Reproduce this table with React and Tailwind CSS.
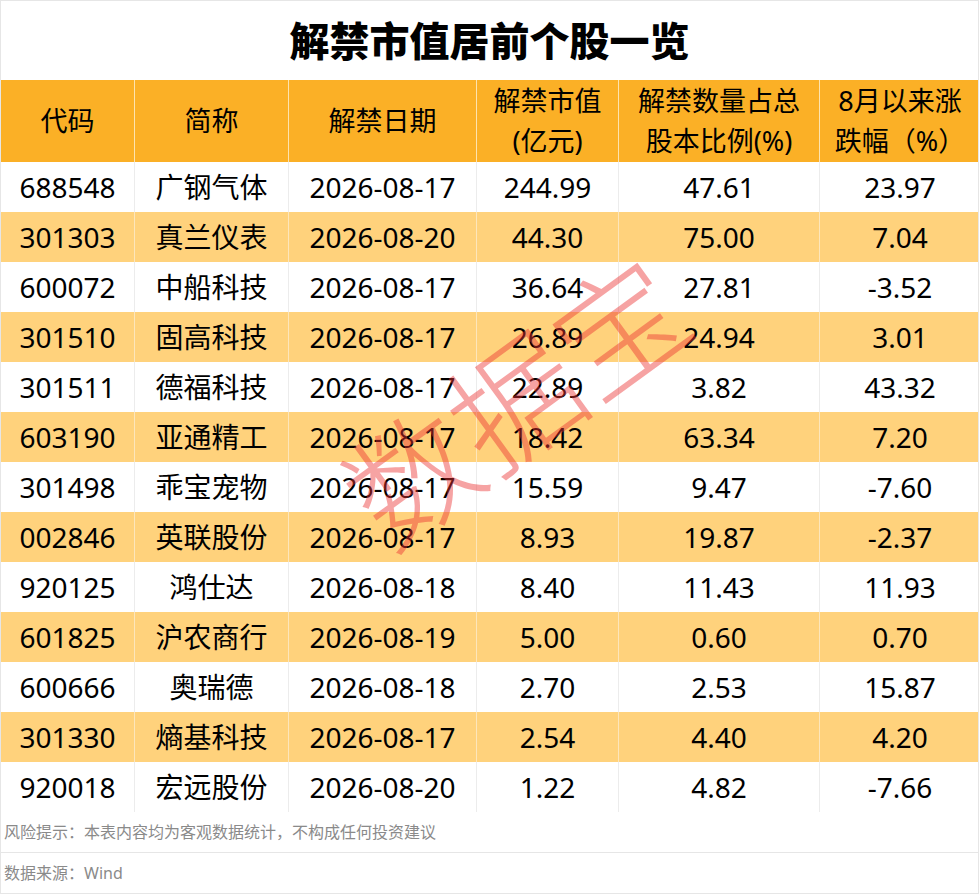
import React from 'react';

const ROWS = [
  ['688548', '广钢气体', '2026-08-17', '244.99', '47.61', '23.97'],
  ['301303', '真兰仪表', '2026-08-20', '44.30', '75.00', '7.04'],
  ['600072', '中船科技', '2026-08-17', '36.64', '27.81', '-3.52'],
  ['301510', '固高科技', '2026-08-17', '26.89', '24.94', '3.01'],
  ['301511', '德福科技', '2026-08-17', '22.89', '3.82', '43.32'],
  ['603190', '亚通精工', '2026-08-17', '18.42', '63.34', '7.20'],
  ['301498', '乖宝宠物', '2026-08-17', '15.59', '9.47', '-7.60'],
  ['002846', '英联股份', '2026-08-17', '8.93', '19.87', '-2.37'],
  ['920125', '鸿仕达', '2026-08-18', '8.40', '11.43', '11.93'],
  ['601825', '沪农商行', '2026-08-19', '5.00', '0.60', '0.70'],
  ['600666', '奥瑞德', '2026-08-18', '2.70', '2.53', '15.87'],
  ['301330', '熵基科技', '2026-08-17', '2.54', '4.40', '4.20'],
  ['920018', '宏远股份', '2026-08-20', '1.22', '4.82', '-7.66'],
];

const COLS = '133px 154px 188px 142px 201px 161px';

const HEADERS = [
  ['代码'],
  ['简称'],
  ['解禁日期'],
  ['解禁市值', '(亿元)'],
  ['解禁数量占总', '股本比例(%)'],
  ['8月以来涨', '跌幅（%）'],
];

export default function App() {
  return (
    <div
      className="relative w-[979px] h-[896px] bg-white overflow-hidden text-black"
      style={{ fontFamily: '"Noto Sans", "Noto Sans CJK SC", sans-serif' }}
    >
      <div className="border border-[#e6e6e6]">
        {/* 标题 */}
        <div className="h-[79px] flex items-center justify-center">
          <h1 className="text-[40px] font-black leading-none">解禁市值居前个股一览</h1>
        </div>

        {/* 表头 */}
        <div className="grid h-[82px] bg-[#fbb026]" style={{ gridTemplateColumns: COLS }}>
          {HEADERS.map((h, i) => (
            <div
              key={i}
              className={`flex flex-col items-center justify-center text-[27px] leading-[40px] ${i > 0 ? 'border-l border-[#fde3ae]' : ''}`}
            >
              {h.map((t) => (
                <span key={t}>{t}</span>
              ))}
            </div>
          ))}
        </div>

        {/* 数据行 */}
        {ROWS.map((r, ri) => (
          <div
            key={r[0]}
            className={`grid h-[50px] ${ri % 2 === 1 ? 'bg-[#ffd27c]' : 'bg-white'}`}
            style={{ gridTemplateColumns: COLS }}
          >
            {r.map((c, ci) => (
              <div
                key={ci}
                className={`flex items-center justify-center text-[28px] leading-none ${ci > 0 ? (ri % 2 === 1 ? 'border-l border-[#fde6bb]' : 'border-l border-[#ececec]') : ''}`}
              >
                {c}
              </div>
            ))}
          </div>
        ))}

        {/* 说明 */}
        <div className="h-[41px] flex items-center pl-[3px] text-[16px] text-[#8a8a8a] border-b border-[#e6e6e6]">
          风险提示：本表内容均为客观数据统计，不构成任何投资建议
        </div>
        <div className="h-[40px] flex items-center pl-[3px] text-[16px] text-[#8a8a8a]">
          数据来源：Wind
        </div>
      </div>

      {/* 水印 */}
      <div className="absolute left-[312px] top-[317px] w-[400px] h-[160px] flex items-center justify-center pointer-events-none">
        <span
          className="text-[128px] font-light leading-none text-[#eb3232]/45 -rotate-[36deg] whitespace-nowrap"
          style={{ fontFamily: '"Noto Sans CJK SC", sans-serif' }}
        >
          数据宝
        </span>
      </div>
    </div>
  );
}
